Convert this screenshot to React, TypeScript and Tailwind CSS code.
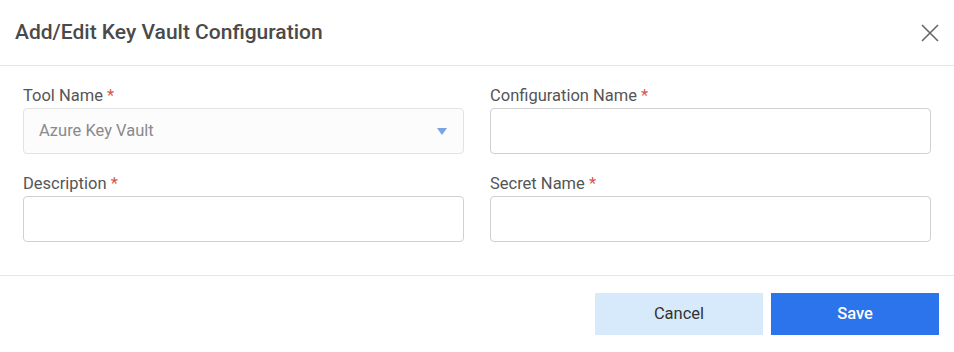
import React from "react";

function Field({ label, children }: { label: string; children: React.ReactNode }) {
  return (
    <div className="flex flex-col">
      <label className="h-5 leading-5 text-[16.5px] text-[#555555] mb-[2px]">
        {label} <span className="text-[#d9534f]">*</span>
      </label>
      {children}
    </div>
  );
}

export default function App() {
  return (
    <div
      className="w-[954px] h-[352px] bg-white flex flex-col"
      style={{ fontFamily: "Roboto, 'Liberation Sans', sans-serif" }}
    >
      <div className="h-[66px] border-b border-[#e6e6e6] flex items-center justify-between pl-[15px] pr-[14px]">
        <h1 className="text-[21px] font-medium text-[#4a4a4a]">Add/Edit Key Vault Configuration</h1>
        <svg width="20" height="20" viewBox="0 0 20 20" className="text-[#666666]">
          <path d="M2 2 L18 18 M18 2 L2 18" stroke="currentColor" strokeWidth="1.6" fill="none" />
        </svg>
      </div>
      <div className="px-[23px] pt-5 pb-[33px] grid grid-cols-2 gap-x-[26px] gap-y-5 border-b border-[#e6e6e6]">
        <Field label="Tool Name">
          <div className="h-[46px] rounded border border-[#e3e3e3] bg-[#fcfcfc] flex items-center justify-between pl-[15px] pr-[16px]">
            <span className="text-[16.5px] text-[#8a8a8a]">Azure Key Vault</span>
            <svg width="10" height="7" viewBox="0 0 10 7">
              <path d="M0 0 L10 0 L5 7 Z" fill="#7aa3e5" />
            </svg>
          </div>
        </Field>
        <Field label="Configuration Name">
          <div className="h-[46px] rounded border border-[#d0d0d0] bg-white" />
        </Field>
        <Field label="Description">
          <div className="h-[46px] rounded border border-[#d0d0d0] bg-white" />
        </Field>
        <Field label="Secret Name">
          <div className="h-[46px] rounded border border-[#d0d0d0] bg-white" />
        </Field>
      </div>
      <div className="flex-1 flex items-center justify-end gap-2 pr-[15px]">
        <button className="w-[168px] h-[42px] bg-[#d6eafb] text-[#333333] text-[16.5px]">Cancel</button>
        <button className="w-[168px] h-[42px] bg-[#2b74ec] text-white text-[16.5px] font-medium">Save</button>
      </div>
    </div>
  );
}
